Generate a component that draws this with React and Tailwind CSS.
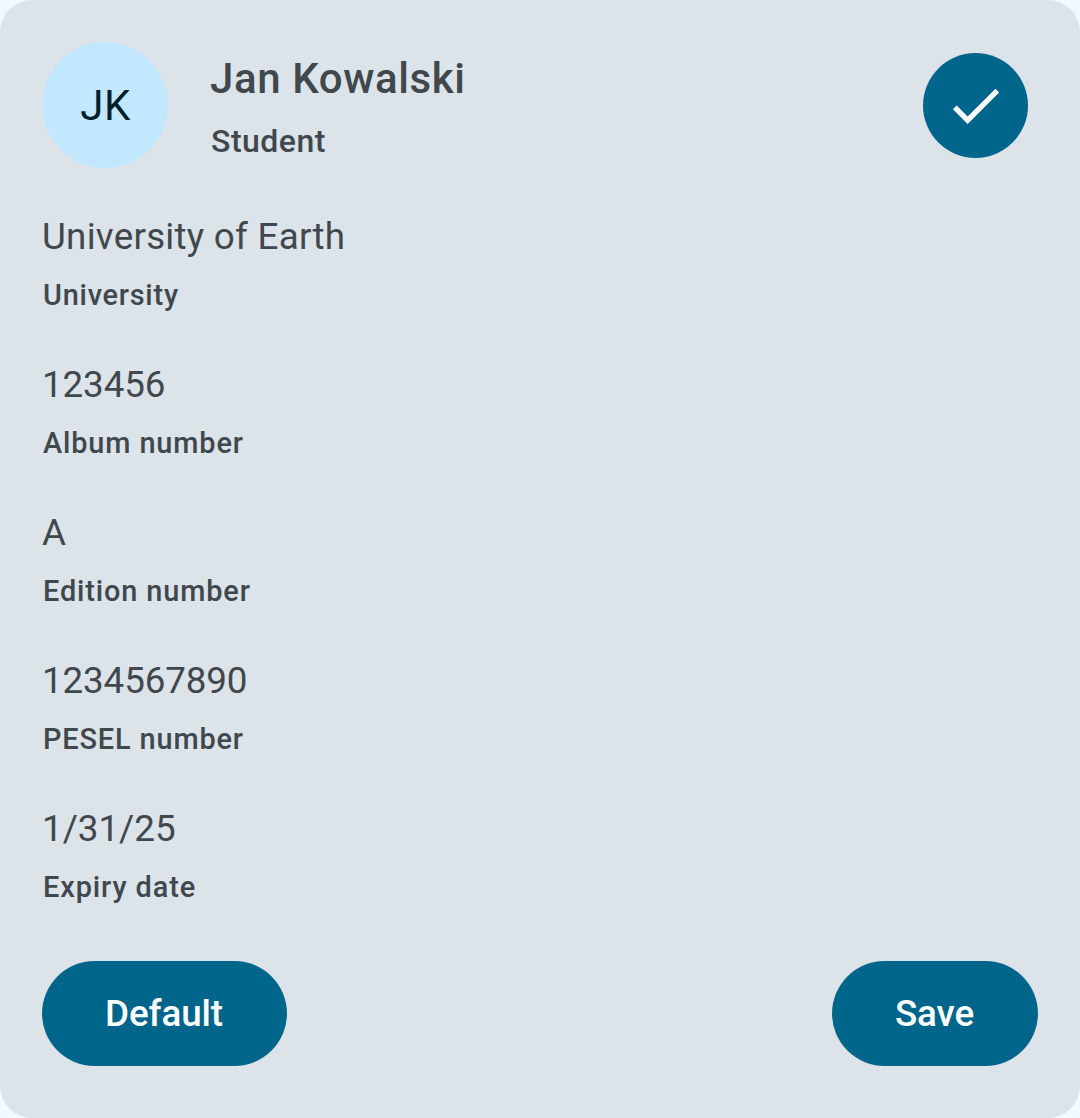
const fields = [
  { value: "University of Earth", label: "University", valueSpacing: "tracking-[0.26px]", labelSpacing: "tracking-[0.76px]" },
  { value: "123456", label: "Album number", valueSpacing: "tracking-[-0.1px]", labelSpacing: "tracking-[0.87px]" },
  { value: "A", label: "Edition number", valueSpacing: "tracking-[0px]", labelSpacing: "tracking-[0.87px]" },
  { value: "1234567890", label: "PESEL number", valueSpacing: "tracking-[-0.12px]", labelSpacing: "tracking-[0.86px]" },
  { value: "1/31/25", label: "Expiry date", valueSpacing: "tracking-[0px]", labelSpacing: "tracking-[0.9px]" },
];

function Field({ value, label, valueSpacing, labelSpacing }) {
  return (
    <div className="h-[148px]">
      <div className={`h-[63px] text-[36.75px] leading-[63px] ${valueSpacing}`}>{value}</div>
      <div className={`h-[54px] pl-px text-[28.9px] font-medium leading-[54px] ${labelSpacing}`}>{label}</div>
    </div>
  );
}

export default function App() {
  return (
    <main className="h-[1118px] w-[1080px] bg-[#f2faff] font-['Roboto',sans-serif]">
      <section className="flex h-full flex-col rounded-[32px] bg-[#dce3e9] px-[42px] text-[#40484d]">
        <header className="flex h-[205px] items-start pt-[42px]">
          <div className="flex size-[126px] items-center justify-center rounded-full bg-[#c2e8ff] pl-px text-[42px] tracking-[0.5px] text-[#001e2c]">JK</div>
          <div className="ml-[42px] whitespace-nowrap">
            <h1 className="h-[68px] pt-[5px] text-[42px] font-medium leading-[63px] tracking-[0.6px]">Jan Kowalski</h1>
            <p className="pl-px text-[32px] font-medium leading-[63px] tracking-[0.5px]">Student</p>
          </div>
          <button className="mt-[11px] mr-[10px] ml-auto flex size-[105px] items-center justify-center rounded-full bg-[#00658b]" aria-label="Selected">
            <svg className="size-[63px]" viewBox="0 0 24 24" fill="white">
              <path d="M9 16.17 4.83 12l-1.42 1.41L9 19 21 7l-1.41-1.41z" />
            </svg>
          </button>
        </header>
        {fields.map((field) => (
          <Field key={field.label} {...field} />
        ))}
        <footer className="mt-4 flex justify-between text-[36.75px] font-medium tracking-[-0.1px] text-white">
          <button className="h-[105px] w-[245px] rounded-full bg-[#00658b] pr-px">Default</button>
          <button className="h-[105px] w-[206px] rounded-full bg-[#00658b] pr-px">Save</button>
        </footer>
      </section>
    </main>
  );
}
